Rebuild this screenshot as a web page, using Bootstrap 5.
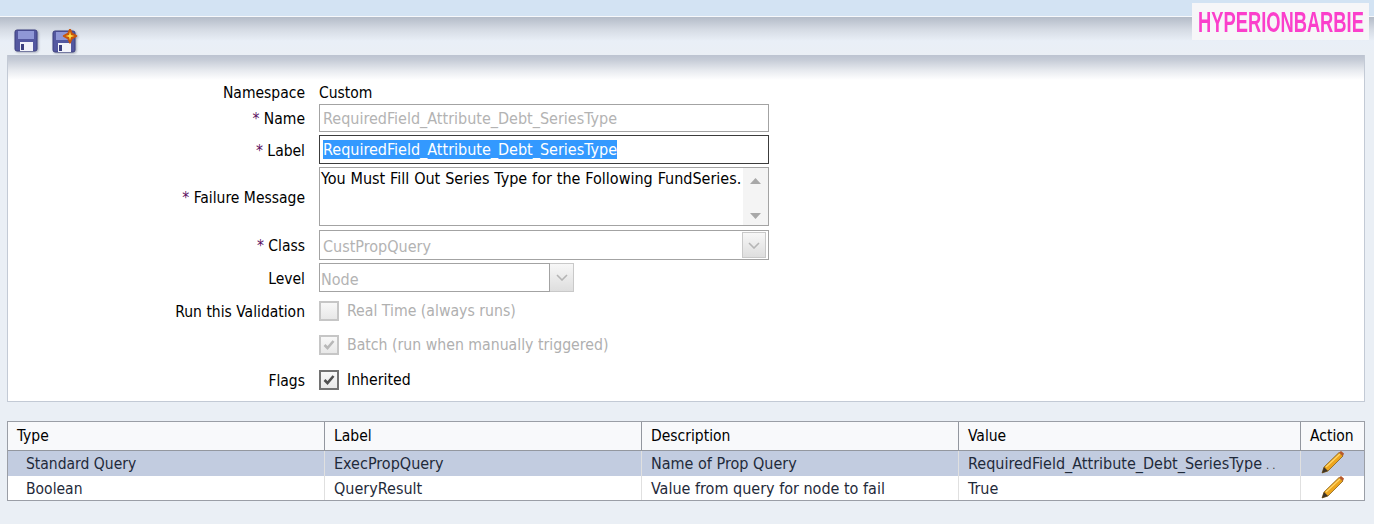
<!DOCTYPE html>
<html lang="en">
<head>
  <meta charset="UTF-8">
  <meta name="viewport" content="width=device-width, initial-scale=1.0">
  <title>Validation Properties</title>
  <link href="https://cdn.jsdelivr.net/npm/bootstrap@5.3.0/dist/css/bootstrap.min.css" rel="stylesheet">
  <style>
    html, body { height: 100%; }
    body {
      font-family: "DejaVu Sans Condensed", "Noto Sans", "Liberation Sans", sans-serif;
      font-size: 15.5px;
      color: #000;
      background: #eaeff5;
      overflow: hidden;
    }
    .top-band { height: 17px; background: #d3e3f3; border-bottom: 1px solid #f6f8fb; }
    .tool-strip { height: 38px; padding: 12px 0 0 14px; gap: 14px; background: linear-gradient(#b4bcc8 0, #d4dae3 12px, #e9eff7 24px, #eaeff5 100%); }
    .tool-strip svg { filter: drop-shadow(1px 1px 1px rgba(70, 75, 100, .45)); }
    .brand-tag {
      position: absolute; top: 3px; left: 1192px; width: 177px; height: 37px;
      background: #f6f6f8; color: #fb3fcb; overflow: hidden;
    }
    .brand-tag span {
      display: block; font-family: "Liberation Sans", sans-serif; font-weight: 700; font-size: 30px; line-height: 38px;
      white-space: nowrap; transform: scaleX(.61); transform-origin: 0 0; padding-left: 10px;
    }
    .form-panel {
      margin: 0 9px 0 7px; height: 347px; background: #fff;
      border: 1px solid #c3cad5; border-top: 0;
    }
    .panel-shade { height: 25px; background: linear-gradient(#bcc3d0 0, #c6ccd7 5px, #e6e9ee 15px, #fff 25px); }
    .form-row-x { display: flex; align-items: center; }
    .field-label { width: 297px; padding-top: 4px; text-align: right; flex: none; }
    .field-label i { font-style: normal; color: #5b0f5f; }
    .field-body { margin-left: 14px; display: flex; align-items: center; font-size: 16px; }
    .plain-value { padding-top: 4px; font-size: 15.5px; }
    .row-ns { height: 22px; padding-top: 2px; }
    .row-name { height: 32px; }
    .row-label { height: 31px; }
    .row-msg { height: 63px; }
    .row-class { height: 34px; }
    .row-level { height: 31px; }
    .row-realtime { height: 36px; }
    .row-batch { height: 32px; }
    .row-flags { height: 38px; }
    .field-input {
      width: 450px; border: 1px solid #a3a3a3; padding: 1px 3px 0; line-height: 26px; height: 28px;
      color: #b3b3b3; background: #fff; white-space: nowrap; overflow: hidden;
    }
    .field-input.is-active { border-color: #3c3c3c; height: 29px; color: #fff; }
    .field-input.is-active span { background: #3399ff; }
    .msg-box { height: 59px; display: flex; color: #000; padding: 0 0 0 1px; line-height: 22px; align-items: stretch; }
    .msg-box .msg-text { flex: 1; word-spacing: .35px; }
    .msg-scroll { width: 25px; background: #f4f4f4; display: flex; flex-direction: column; justify-content: space-between; align-items: center; padding: 10px 0 6px; }
    .select-box { height: 30px; display: flex; padding: 0 2px 0 3px; }
    .select-box .select-value { flex: 1; line-height: 32px; }
    .select-arrow {
      width: 24px; height: 26px; margin-top: 1px; background: linear-gradient(#f7f7f7, #dedede);
      border: 1px solid #c9c9c9; display: flex; align-items: center; justify-content: center;
    }
    .level-box { width: 231px; height: 29px; padding-left: 1px; }
    .level-box .select-value { line-height: 32px; }
    .level-arrow { width: 24px; height: 29px; margin: 0; border-left: 0; }
    .check-box {
      width: 20px; height: 20px; border: 2px solid #c6c6c6; flex: none;
      background: linear-gradient(#f8f8f8, #e8e8e8); display: flex; align-items: center; justify-content: center;
    }
    .check-box.is-on { border-color: #727272; }
    .check-text { margin-left: 8px; font-size: 15.7px; color: #b0b0b0; }
    .check-text.is-on { color: #000; }
    .query-table { margin: 19px 9px 0 7px; width: 1358px; table-layout: fixed; border-collapse: separate; border-spacing: 0; background: #fff; border: 1px solid #9a9ea6; }
    .query-table th { font-weight: 400; height: 29px; padding: 2px 9px 0; background: #f8f9fb; border-bottom: 1px solid #93979f; border-right: 1px solid #93979f; }
    .query-table th:last-child, .query-table td:last-child { border-right: 0; }
    .query-table td { height: 24px; line-height: 20px; padding: 3px 9px 0; font-size: 16px; color: #1f2a3a; border-right: 1px solid #e0e0e0; white-space: nowrap; overflow: hidden; vertical-align: top; }
    .query-table td.first-cell { padding-left: 18px; font-size: 15.5px; }
    .query-table tr.is-picked td { background: #c2cce0; }
    .query-table td.action-cell { padding: 0; text-align: center; overflow: visible; }
    .query-table .pencil { display: block; margin: -1px 0 0 20px; }
    .trail-dots { font-size: 11px; color: #333; letter-spacing: 3px; margin-left: 4px; }
  </style>
</head>
<body>
  <div class="top-band"></div>
  <div class="tool-strip d-flex align-items-start">
    <svg width="24" height="23" viewBox="0 0 24 23" aria-label="Save">
      <path d="M1 3a2 2 0 0 1 2-2h18a2 2 0 0 1 2 2v17a2 2 0 0 1-2 2H3a2 2 0 0 1-2-2z" fill="#5458a0" stroke="#3d4080"/>
      <rect x="4" y="2" width="16" height="8" fill="#8f97d6"/>
      <rect x="6" y="13" width="13" height="9" fill="#f2f3fa"/>
      <rect x="7" y="15" width="3" height="6" fill="#3d4080"/>
    </svg>
    <svg width="26" height="24" viewBox="0 0 26 24" aria-label="Save as">
      <path d="M1 4a2 2 0 0 1 2-2h18a2 2 0 0 1 2 2v17a2 2 0 0 1-2 2H3a2 2 0 0 1-2-2z" fill="#5458a0" stroke="#3d4080"/>
      <rect x="4" y="3" width="14" height="8" fill="#8f97d6"/>
      <rect x="6" y="14" width="13" height="9" fill="#f2f3fa"/>
      <rect x="7" y="16" width="3" height="6" fill="#3d4080"/>
      <path d="M18 0l2 4.500 4.500 2.500-4.500 2.500-2 4.500-2-4.500-4.500-2.500 4.500-2.500z" fill="#c8560e" stroke="#c8560e" stroke-width="1.500" stroke-linejoin="round"/>
      <path d="M18 2.500l1 3.500 3.500 1-3.500 1-1 3.500-1-3.500-3.500-1 3.500-1z" fill="#ffdf45"/>
    </svg>
  </div>
  <div class="brand-tag"><span>HYPERIONBARBIE</span></div>

  <div class="form-panel">
    <div class="panel-shade"></div>
    <div class="form-row-x row-ns">
      <div class="field-label">Namespace</div><div class="field-body plain-value">Custom</div>
    </div>
    <div class="form-row-x row-name">
      <div class="field-label"><i>*</i> Name</div>
      <div class="field-body"><div class="field-input">RequiredField_Attribute_Debt_SeriesType</div></div>
    </div>
    <div class="form-row-x row-label">
      <div class="field-label"><i>*</i> Label</div>
      <div class="field-body"><div class="field-input is-active"><span>RequiredField_Attribute_Debt_SeriesType</span></div></div>
    </div>
    <div class="form-row-x row-msg">
      <div class="field-label"><i>*</i> Failure Message</div>
      <div class="field-body">
        <div class="field-input msg-box">
          <div class="msg-text">You Must Fill Out Series Type for the Following FundSeries.</div>
          <div class="msg-scroll">
            <svg width="11" height="6"><path d="M5.500 0L11 6H0z" fill="#a8a8a8"/></svg>
            <svg width="11" height="6"><path d="M5.500 6L11 0H0z" fill="#a8a8a8"/></svg>
          </div>
        </div>
      </div>
    </div>
    <div class="form-row-x row-class">
      <div class="field-label"><i>*</i> Class</div>
      <div class="field-body">
        <div class="field-input select-box">
          <div class="select-value">CustPropQuery</div>
          <div class="select-arrow"><svg width="12" height="7"><path d="M1 1l5 5 5-5" fill="none" stroke="#b5b5b5" stroke-width="1.600"/></svg></div>
        </div>
      </div>
    </div>
    <div class="form-row-x row-level">
      <div class="field-label">Level</div>
      <div class="field-body">
        <div class="field-input select-box level-box"><div class="select-value">Node</div></div>
        <div class="select-arrow level-arrow"><svg width="12" height="7"><path d="M1 1l5 5 5-5" fill="none" stroke="#b5b5b5" stroke-width="1.600"/></svg></div>
      </div>
    </div>
    <div class="form-row-x row-realtime">
      <div class="field-label">Run this Validation</div>
      <div class="field-body"><div class="check-box"></div><span class="check-text">Real Time (always runs)</span></div>
    </div>
    <div class="form-row-x row-batch">
      <div class="field-label"></div>
      <div class="field-body">
        <div class="check-box"><svg width="12" height="10"><path d="M1.500 5l3 3 6-7" fill="none" stroke="#b8b8b8" stroke-width="2.600"/></svg></div>
        <span class="check-text">Batch (run when manually triggered)</span>
      </div>
    </div>
    <div class="form-row-x row-flags">
      <div class="field-label">Flags</div>
      <div class="field-body">
        <div class="check-box is-on"><svg width="12" height="10"><path d="M1.500 5l3 3 6-7" fill="none" stroke="#4f4f4f" stroke-width="2.600"/></svg></div>
        <span class="check-text is-on">Inherited</span>
      </div>
    </div>
  </div>

  <table class="query-table">
    <colgroup><col style="width:317px"><col style="width:317px"><col style="width:317px"><col style="width:342px"><col></colgroup>
    <thead>
      <tr><th>Type</th><th>Label</th><th>Description</th><th>Value</th><th>Action</th></tr>
    </thead>
    <tbody>
      <tr class="is-picked">
        <td class="first-cell">Standard Query</td><td>ExecPropQuery</td><td>Name of Prop Query</td>
        <td>RequiredField_Attribute_Debt_SeriesType<span class="trail-dots">..</span></td>
        <td class="action-cell">
          <svg class="pencil" width="25" height="24" viewBox="0 0 25 24"><path d="M1 23l2-6L18 2.500l4 3.500L7 21z" fill="#eda51d" stroke="#7a5510" stroke-width=".7"/><path d="M5 17L19 4" stroke="#ffd76a" stroke-width="1.200"/><path d="M1 23l2-6 4 4z" fill="#3f3427"/><path d="M18 2.500l2-1.500 3 2.500-1 2.500z" fill="#b9582a"/></svg>
        </td>
      </tr>
      <tr>
        <td class="first-cell">Boolean</td><td>QueryResult</td><td>Value from query for node to fail</td><td>True</td>
        <td class="action-cell">
          <svg class="pencil" width="25" height="24" viewBox="0 0 25 24"><path d="M1 23l2-6L18 2.500l4 3.500L7 21z" fill="#eda51d" stroke="#7a5510" stroke-width=".7"/><path d="M5 17L19 4" stroke="#ffd76a" stroke-width="1.200"/><path d="M1 23l2-6 4 4z" fill="#3f3427"/><path d="M18 2.500l2-1.500 3 2.500-1 2.500z" fill="#b9582a"/></svg>
        </td>
      </tr>
    </tbody>
  </table>
  <script src="https://cdn.jsdelivr.net/npm/bootstrap@5.3.0/dist/js/bootstrap.bundle.min.js"></script>
</body>
</html>
